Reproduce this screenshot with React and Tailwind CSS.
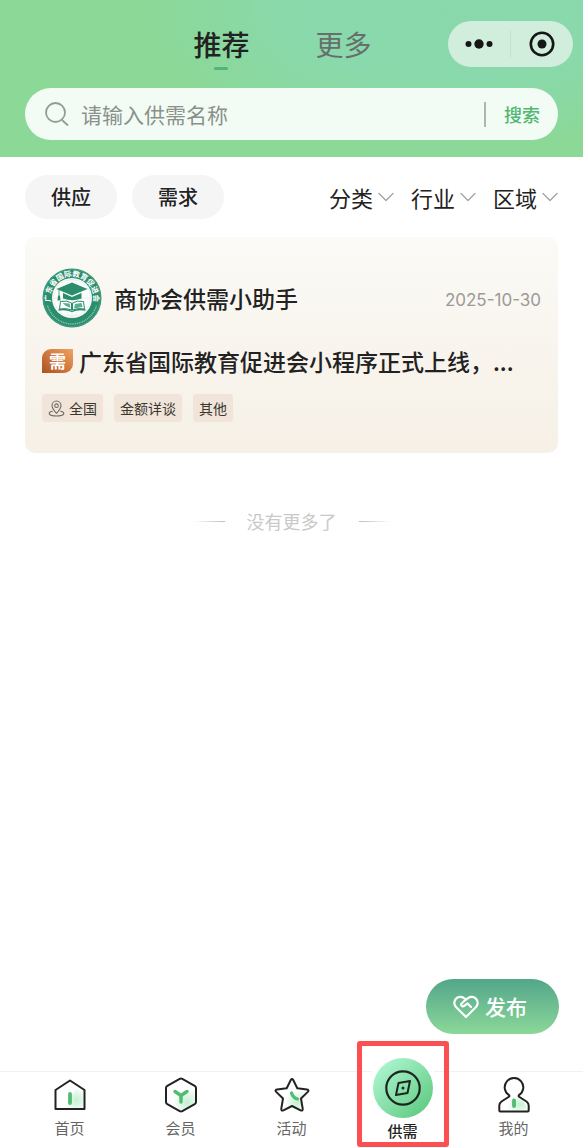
import React from "react";

function SearchIcon() {
  return (
    <svg viewBox="0 0 24 24" className="h-6 w-6 shrink-0" fill="none" stroke="#919e93" strokeWidth="1.8" strokeLinecap="round" aria-hidden="true">
      <circle cx="10.5" cy="10.5" r="9.5" />
      <path d="M17.5 18.5 22.5 23" />
    </svg>
  );
}

function Chevron() {
  return (
    <svg viewBox="0 0 16 16" className="h-4 w-4 shrink-0" fill="none" stroke="#a3a3a3" strokeWidth="1.3" strokeLinecap="round" strokeLinejoin="round" aria-hidden="true">
      <path d="M1 4.5 8 11.5 15 4.5" />
    </svg>
  );
}

function Seal() {
  return (
    <svg viewBox="0 0 120 120" className="h-15 w-15 shrink-0" role="img" aria-label="广东省国际教育促进会">
      <defs>
        <path id="sealTop" d="M 20 76 A 43 43 0 1 1 100 76" />
      </defs>
      <circle cx="60" cy="60" r="59" fill="#2a8e6d" />
      <circle cx="60" cy="60" r="57" fill="none" stroke="#5fae95" strokeWidth="1" />
      <circle cx="60" cy="60" r="40" fill="#fdfefc" />
      <g fill="none" stroke="#d5e5de" strokeWidth="1">
        <circle cx="60" cy="60" r="37" />
        <ellipse cx="60" cy="60" rx="18" ry="37" />
        <path d="M60 23V97M23 60H97M28 42H92M28 78H92" />
      </g>
      <text fill="#fff" fontSize="15" fontWeight="700" fontFamily="Noto Sans CJK SC, sans-serif">
        <textPath href="#sealTop" startOffset="50%" textAnchor="middle">广东省国际教育促进会</textPath>
      </text>
      <path d="M11 75A51 51 0 0 0 109 75" fill="none" stroke="#8cc7b2" strokeWidth="3" strokeDasharray="2 1.6" />
      <path d="M60 29 91 42 60 55 29 42Z" fill="#2a8e6d" />
      <path d="M42 50V61Q60 68 79 61V50L60 58Z" fill="#2a8e6d" />
      <path d="M34 44V55" stroke="#2a8e6d" strokeWidth="1.6" />
      <path d="M32 55H36L37 65H31Z" fill="#2a8e6d" />
      <path d="M37 67Q50 64 59 70V84Q48 79 35 82Z" fill="#fff" stroke="#2a8e6d" strokeWidth="2" />
      <path d="M83 67Q70 64 61 70V84Q72 79 85 82Z" fill="#fff" stroke="#2a8e6d" strokeWidth="2" />
      <path d="M41 70 55 71 57 80 48 76ZM79 70 66 72 64 81 81 78Z" fill="#5aad91" />
      <path d="M33 84Q48 81 60 87Q72 81 87 84" fill="none" stroke="#2a8e6d" strokeWidth="2.6" />
    </svg>
  );
}

function PinIcon() {
  return (
    <svg viewBox="0 0 17 17" className="h-[17px] w-[17px] shrink-0" fill="none" stroke="#6f6a65" strokeWidth="1.1" strokeLinecap="round" aria-hidden="true">
      <path d="M8.5 13.3C5.7 10.4 4 8.3 4 5.6A4.5 4.6 0 0 1 13 5.6C13 8.3 11.3 10.4 8.5 13.3Z" />
      <circle cx="8.5" cy="5.7" r="1.8" />
      <path d="M4.3 11.2C-1 12.5 .5 16 8.5 16S18 12.5 12.7 11.2" />
    </svg>
  );
}

function HeartIcon() {
  return (
    <svg viewBox="0 0 26 24" className="h-6 w-[26px] shrink-0" fill="none" stroke="#fff" strokeWidth="2.2" strokeLinecap="round" strokeLinejoin="round" aria-hidden="true">
      <path d="M13 22 3.2 12.2A6 6 0 0 1 11 3.1L13 4.5 15 3.1A6 6 0 0 1 22.8 12.2Z" />
      <path d="M13 4.5 8.8 8.3A1.7 1.7 0 0 0 11.2 10.9L14.5 8.5 18 12" />
    </svg>
  );
}

function HomeIcon() {
  return (
    <svg viewBox="0 0 32 32" className="h-8 w-8" fill="none" strokeLinecap="round" strokeLinejoin="round" aria-hidden="true">
      <path d="M10 29H29V12L22 9Z" fill="url(#glow)" />
      <path d="M1.500 30V11L16 1.500 30.500 11V30Z" stroke="#222" strokeWidth="2" />
      <path d="M16 15V24" stroke="#50bd72" strokeWidth="3.800" />
    </svg>
  );
}

function MemberIcon() {
  return (
    <svg viewBox="0 0 32 36" className="h-9 w-8" fill="none" strokeLinecap="round" strokeLinejoin="round" aria-hidden="true">
      <path d="M7 27 17 14 30 12V26L16 34Z" fill="url(#glow)" />
      <path d="M14.700 1.900Q16 1.200 17.300 1.900L29.700 8.900Q31 9.700 31 11V25Q31 26.300 29.700 27.100L17.300 34.100Q16 34.800 14.700 34.100L2.300 27.100Q1 26.300 1 25V11Q1 9.700 2.300 8.900Z" stroke="#222" strokeWidth="2" />
      <path d="M10 14.500 16 18.500 22 14.500M16 18.500V25" stroke="#50bd72" strokeWidth="3.400" />
    </svg>
  );
}

function StarIcon() {
  return (
    <svg viewBox="0 0 36 36" className="h-9 w-9" fill="none" strokeLinecap="round" strokeLinejoin="round" aria-hidden="true">
      <path d="M10 32V22L18 15 30 14 26 33 18 29Z" fill="url(#glow)" />
      <path d="M16.900 2.800Q18 1 19.100 2.800L23.300 11.300 33 12.600Q35.500 13.100 33.800 14.900L27 21.500 28.700 31.700Q28.900 34.400 26.600 33.300L18 29 9.400 33.300Q7.100 34.400 7.300 31.700L9 21.500 2.200 14.900Q.5 13.100 3 12.600L12.700 11.300Z" stroke="#222" strokeWidth="2" />
      <path d="M17.500 16Q19 21 23.500 22" stroke="#50bd72" strokeWidth="3.200" />
    </svg>
  );
}

function CompassIcon() {
  return (
    <svg viewBox="0 0 36 36" className="h-9 w-9" fill="none" stroke="#1d2520" strokeLinejoin="round" aria-hidden="true">
      <circle cx="18" cy="18" r="16.700" strokeWidth="2.200" />
      <path d="M13.500 13 25 11 22.500 23 11 25Z" strokeWidth="2" />
      <circle cx="18" cy="18" r="1.500" fill="#1d2520" stroke="none" />
    </svg>
  );
}

function PersonIcon() {
  return (
    <svg viewBox="0 0 32 36" className="h-9 w-8" fill="none" strokeLinecap="round" strokeLinejoin="round" aria-hidden="true">
      <path d="M8 33 16 19 24 20 30 33Z" fill="url(#glow)" />
      <path d="M11.300 18.300A9.300 9.300 0 1 1 20.700 18.300V19.500L28.500 24.500Q30.500 26 30.700 28.500V33.500Q30.700 34.500 29.700 34.500H2.300Q1.300 34.500 1.300 33.500V28.500Q1.500 26 3.500 24.500L11.300 19.500Z" stroke="#222" strokeWidth="2" />
      <path d="M16 23.500V29" stroke="#50bd72" strokeWidth="3.800" />
    </svg>
  );
}

function TabLink({ icon, label }) {
  return (
    <a href="#" className="flex flex-1 flex-col items-center">
      <span className="flex h-9 items-center justify-center">{icon}</span>
      <span className="mt-[3px] text-[15px] leading-6 text-[#666]">{label}</span>
    </a>
  );
}

export default function App() {
  return (
    <div className="flex min-h-screen flex-col bg-white font-['Noto_Sans_CJK_SC','Noto_Sans',sans-serif] text-[#222]">
      <svg className="absolute h-0 w-0" aria-hidden="true">
        <defs>
          <radialGradient id="glow" cx="0.65" cy="0.6" r="0.6">
            <stop offset="0" stopColor="#c4f0d2" />
            <stop offset="1" stopColor="#c4f0d2" stopOpacity="0.1" />
          </radialGradient>
        </defs>
      </svg>

      <header className="bg-[#8bd897] bg-[radial-gradient(ellipse_60%_105%_at_76%_8%,#88d8ab_0%,#89d9ad_38%,#8bd897_85%)] pb-[17px]">
        <div className="grid h-[88px] grid-cols-[1fr_auto_1fr] items-center">
          <span />
          <nav className="mr-[18px] flex gap-[66px]">
            <a href="#" className="relative text-[28px] leading-10 font-medium" aria-current="page">
              推荐
              <span className="absolute -bottom-1.5 left-1/2 h-[3px] w-3.5 -translate-x-1/2 rounded-full bg-[#50b576]" />
            </a>
            <a href="#" className="text-[28px] leading-10 text-[#666f69]">更多</a>
          </nav>
          <div className="mr-2.5 flex h-[46px] w-[125px] items-center justify-self-end rounded-full bg-[#d1eedc]">
            <button type="button" aria-label="菜单" className="flex flex-1 justify-center">
              <svg viewBox="0 0 28 10" className="h-2.5 w-7" fill="#161616">
                <circle cx="3.500" cy="5" r="3" /><circle cx="14" cy="5" r="4.700" /><circle cx="24.500" cy="5" r="3" />
              </svg>
            </button>
            <span className="h-7 w-px bg-[#c3e3d0]" />
            <button type="button" aria-label="关闭" className="flex flex-1 justify-center">
              <svg viewBox="0 0 26 26" className="h-[26px] w-[26px]">
                <circle cx="13" cy="13" r="11.200" fill="none" stroke="#161616" strokeWidth="2.600" />
                <circle cx="13" cy="13" r="4.500" fill="#161616" />
              </svg>
            </button>
          </div>
        </div>
        <form className="mx-[25px] flex h-[52px] items-center rounded-full bg-[#f2fcf5] pr-[18px] pl-5" onSubmit={(e) => e.preventDefault()}>
          <SearchIcon />
          <input type="text" aria-label="供需名称" placeholder="请输入供需名称" className="ml-3 h-full min-w-0 flex-1 bg-transparent text-[21px] outline-none placeholder:text-[#8a918c]" />
          <span className="h-[25px] w-0.5 bg-[#adb5af]" />
          <button type="submit" className="ml-[18px] text-[18px] font-medium text-[#51b772]">搜索</button>
        </form>
      </header>

      <main className="flex flex-1 flex-col">
        <div className="mx-[25px] mt-[18px] flex items-center justify-between">
          <div className="flex gap-[15px]">
            <button type="button" className="h-11 w-[92px] rounded-full bg-[#f5f5f5] text-[20px] font-medium">供应</button>
            <button type="button" className="h-11 w-[92px] rounded-full bg-[#f5f5f5] text-[20px] font-medium">需求</button>
          </div>
          <div className="flex gap-[17px] text-[22px] leading-8">
            <button type="button" className="flex items-center gap-[5px]">分类<Chevron /></button>
            <button type="button" className="flex items-center gap-[5px]">行业<Chevron /></button>
            <button type="button" className="flex items-center gap-[5px]">区域<Chevron /></button>
          </div>
        </div>

        <article className="mx-[25px] mt-[18px] rounded-[10px] bg-linear-to-b from-[#fbfaf6] to-[#f6f0e6] px-[17px] pt-[31px] pb-[31px]">
          <div className="flex items-center">
            <Seal />
            <h2 className="ml-3 flex-1 text-[23px] leading-8 font-medium">商协会供需小助手</h2>
            <time className="pt-1 font-['Inter',sans-serif] text-[17px] leading-6 text-[#9b9a97]" dateTime="2025-10-30">2025-10-30</time>
          </div>
          <div className="mt-[15px] flex items-center gap-1.5">
            <span className="flex h-6 w-[31px] shrink-0 items-center justify-center rounded-tl-[9px] rounded-br-[9px] bg-linear-to-tr from-[#ad511c] to-[#f0a263] text-[17px] leading-6 font-bold text-white">需</span>
            <h3 className="min-w-0 flex-1 overflow-hidden text-[23px] leading-9 font-medium whitespace-nowrap">广东省国际教育促进会小程序正式上线，...</h3>
          </div>
          <ul className="mt-[15px] flex gap-[11px] text-[14px] leading-7 text-[#3a3733]">
            <li className="flex items-center gap-1 rounded-[4px] bg-[#f0e5d8] px-1.5"><PinIcon />全国</li>
            <li className="rounded-[4px] bg-[#f0e5d8] px-1.5">金额详谈</li>
            <li className="rounded-[4px] bg-[#f0e5d8] px-1.5">其他</li>
          </ul>
        </article>

        <div className="mt-[54px] flex items-center justify-center gap-[22px] text-[18px] leading-7 text-[#c9c9c9]">
          <span className="h-px w-[31px] bg-linear-to-r from-transparent to-[#bbb]" />
          没有更多了
          <span className="h-px w-[31px] bg-linear-to-l from-transparent to-[#bbb]" />
        </div>

        <button type="button" className="mt-auto mr-6 mb-[37px] flex h-[55px] items-center gap-1.5 self-end rounded-full bg-linear-to-b from-[#52a68a] to-[#8bd898] pr-8 pl-[27px] text-[21px] font-medium text-white">
          <HeartIcon />
          发布
        </button>
      </main>

      <nav className="flex h-[77px] border-t border-[#f1f1f1] px-3.5 pt-[5px]">
        <TabLink icon={<HomeIcon />} label="首页" />
        <TabLink icon={<MemberIcon />} label="会员" />
        <TabLink icon={<StarIcon />} label="活动" />
        <a href="#" aria-current="page" className="relative -mt-[19px] flex flex-1 flex-col items-center">
          <span className="flex h-15 w-15 items-center justify-center rounded-full bg-linear-to-br from-[#b5fadb] to-[#55c677] ring-5 ring-white">
            <CompassIcon />
          </span>
          <span className="mt-px text-[15px] leading-6 font-medium">供需</span>
          <span className="absolute -top-[17px] bottom-px left-1/2 w-[92px] -translate-x-1/2 rounded-[3px] border-5 border-[#fb4f52]" />
        </a>
        <TabLink icon={<PersonIcon />} label="我的" />
      </nav>
    </div>
  );
}
